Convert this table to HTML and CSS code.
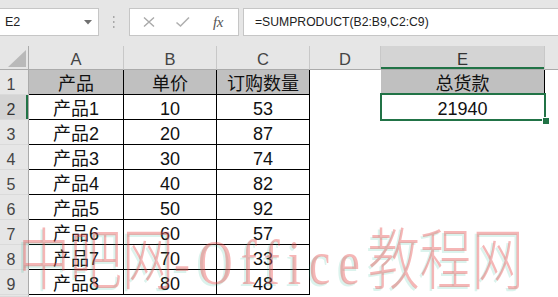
FILE: index.html
```html
<!DOCTYPE html>
<html>
<head>
<meta charset="utf-8">
<link rel="stylesheet" href="styles.css">
</head>
<body>
<div class="fbar">
  <div class="namebox"><span>E2</span>
    <svg class="dd" width="8" height="5" viewBox="0 0 8 5"><path d="M0 0H8L4 4.5Z" fill="#707070"/></svg>
  </div>
  <div class="sep">
    <svg width="2" height="12" viewBox="0 0 2 12"><rect x="0" y="0" width="1.5" height="2" fill="#a8a8a8"/><rect x="0" y="5" width="1.5" height="2" fill="#a8a8a8"/><rect x="0" y="10" width="1.5" height="2" fill="#a8a8a8"/></svg>
  </div>
  <div class="btns">
    <svg class="ic" width="14" height="12" viewBox="0 0 14 12"><path d="M2 1.5L12 10.5M12 1.5L2 10.5" stroke="#a9a9a9" stroke-width="1.4" fill="none"/></svg>
    <svg class="ic" width="16" height="12" viewBox="0 0 16 12"><path d="M1.5 6.5L5.5 10L14 1.5" stroke="#b0b0b0" stroke-width="1.6" fill="none"/></svg>
    <span class="fx">fx</span>
  </div>
  <div class="formula">=SUMPRODUCT(B2:B9,C2:C9)</div>
</div>
<div class="sheet">
  <div class="grid">
    <div class="ch corner"><svg width="18" height="17" viewBox="0 0 18 17"><path d="M18 0V17H0Z" fill="#b9b9b9"/></svg></div>
    <div class="ch">A</div><div class="ch">B</div><div class="ch">C</div><div class="ch">D</div><div class="ch sel">E</div><div class="ch last"></div>

    <div class="rh">1</div><div class="c t hd">产品</div><div class="c t hd">单价</div><div class="c t hd">订购数量</div><div class="c"></div><div class="c t hd">总货款</div><div class="c"></div>
    <div class="rh rsel">2</div><div class="c t">产品1</div><div class="c t">10</div><div class="c t">53</div><div class="c"></div><div class="c t active">21940<span class="selbox"><span class="handle"></span></span></div><div class="c"></div>
    <div class="rh">3</div><div class="c t">产品2</div><div class="c t">20</div><div class="c t">87</div><div class="c"></div><div class="c"></div><div class="c"></div>
    <div class="rh">4</div><div class="c t">产品3</div><div class="c t">30</div><div class="c t">74</div><div class="c"></div><div class="c"></div><div class="c"></div>
    <div class="rh">5</div><div class="c t">产品4</div><div class="c t">40</div><div class="c t">82</div><div class="c"></div><div class="c"></div><div class="c"></div>
    <div class="rh">6</div><div class="c t">产品5</div><div class="c t">50</div><div class="c t">92</div><div class="c"></div><div class="c"></div><div class="c"></div>
    <div class="rh">7</div><div class="c t">产品6</div><div class="c t">60</div><div class="c t">57</div><div class="c"></div><div class="c"></div><div class="c"></div>
    <div class="rh">8</div><div class="c t">产品7</div><div class="c t">70</div><div class="c t">33</div><div class="c"></div><div class="c"></div><div class="c"></div>
    <div class="rh">9</div><div class="c t">产品8</div><div class="c t">80</div><div class="c t">48</div><div class="c"></div><div class="c"></div><div class="c"></div>
    <div class="rh"></div><div class="c"></div><div class="c"></div><div class="c"></div><div class="c"></div><div class="c"></div><div class="c"></div>
  </div>
  <div class="wm"><span class="wm-cjk">中吧网</span><span class="wm-lat">-Office</span><span class="wm-cjk">教程网</span></div>
</div>
</body>
</html>
```
FILE: styles.css
```css
html, body {
  margin: 0;
  padding: 0;
}
body {
  width: 558px;
  height: 297px;
  overflow: hidden;
  background: #fff;
  font-family: "Liberation Sans", "Noto Sans CJK SC", sans-serif;
}

/* formula bar */
.fbar {
  height: 46px;
  box-sizing: border-box;
  padding-top: 8px;
  background: #e6e6e6;
  display: flex;
  align-items: flex-start;
}
.namebox {
  margin-left: -1px;
  width: 100px;
  height: 28px;
  box-sizing: border-box;
  background: #fff;
  border: 1px solid #c6c6c6;
  display: flex;
  align-items: center;
  justify-content: space-between;
  padding: 0 6px 0 5px;
  font-size: 12.5px;
  color: #222;
}
.dd {
  margin-top: 1px;
}
.sep {
  width: 30px;
  height: 28px;
  display: flex;
  align-items: center;
  justify-content: center;
}
.btns {
  width: 110px;
  height: 28px;
  box-sizing: border-box;
  background: #fff;
  border: 1px solid #c6c6c6;
  display: flex;
  align-items: center;
  padding-left: 12px;
  gap: 19px;
}
.fx {
  font-family: "Liberation Serif", serif;
  font-style: italic;
  font-size: 15px;
  color: #555;
  margin-left: 3px;
  letter-spacing: -0.5px;
}
.formula {
  margin-left: 4px;
  flex: 1;
  height: 28px;
  box-sizing: border-box;
  background: #fff;
  border: 1px solid #c6c6c6;
  margin-right: -2px;
  padding-left: 11px;
  display: flex;
  align-items: center;
  font-size: 12.2px;
  color: #222;
}

/* sheet */
.sheet {
  position: relative;
  height: 251px;
  overflow: hidden;
}
.grid {
  display: grid;
  grid-template-columns: 29px 95px 93px 93px 71px 164px 1fr;
  grid-template-rows: 24px repeat(9, 25px) 2px;
}
.ch {
  box-sizing: border-box;
  background: #e6e6e6;
  border-right: 1px solid #c8c8c8;
  border-bottom: 1px solid #ababab;
  display: flex;
  align-items: flex-end;
  justify-content: center;
  font-size: 16.5px;
  line-height: 18px;
  color: #444;
  padding-bottom: 1px;
}
.ch.corner {
  border-right-color: #ababab;
  align-items: flex-start;
  justify-content: flex-end;
  padding: 4px 2px 0 0;
}
.ch.last {
  border-right: none;
}
.ch.sel {
  background: #d4d4d4;
  box-shadow: inset 0 -2px 0 #217346;
  color: #333;
}
.rh {
  box-sizing: border-box;
  background: #e6e6e6;
  border-right: 1px solid #ababab;
  border-bottom: 1px solid #dadada;
  display: flex;
  align-items: flex-end;
  justify-content: center;
  padding-right: 6px;
  font-size: 16px;
  line-height: 18px;
  color: #444;
}
.rh.rsel {
  background: #d4d4d4;
  box-shadow: inset -2px 0 0 #217346;
  color: #333;
}
.c {
  box-sizing: border-box;
  display: flex;
  align-items: flex-end;
  justify-content: center;
  font-size: 18px;
  line-height: 19px;
  color: #111;
  border-right: 1px solid transparent;
  border-bottom: 1px solid transparent;
}
.c.t {
  border-right-color: #000;
  border-bottom-color: #000;
}
.c.hd {
  background: #c0c0c0;
}
.active {
  position: relative;
}
.selbox {
  position: absolute;
  left: -1px;
  top: -2px;
  right: -2px;
  bottom: -2px;
  border: 2px solid #217346;
}
.handle {
  position: absolute;
  right: -5px;
  bottom: -5px;
  width: 6px;
  height: 6px;
  background: #217346;
  box-shadow: 0 0 0 1px #fff;
}

/* watermark */
.wm {
  position: absolute;
  left: 18px;
  top: 176px;
  white-space: nowrap;
  line-height: 52px;
  transform: scaleY(1.3);
  transform-origin: top left;
  color: rgba(232, 80, 80, 0.42);
  text-shadow: -2px 1px 0 rgba(0, 170, 130, 0.14);
  pointer-events: none;
}
.wm-cjk {
  font-family: "Noto Sans CJK SC", sans-serif;
  font-weight: 300;
  font-size: 52px;
}
.wm-lat {
  font-family: "Liberation Serif", serif;
  font-size: 48px;
  letter-spacing: 8px;
}
```
